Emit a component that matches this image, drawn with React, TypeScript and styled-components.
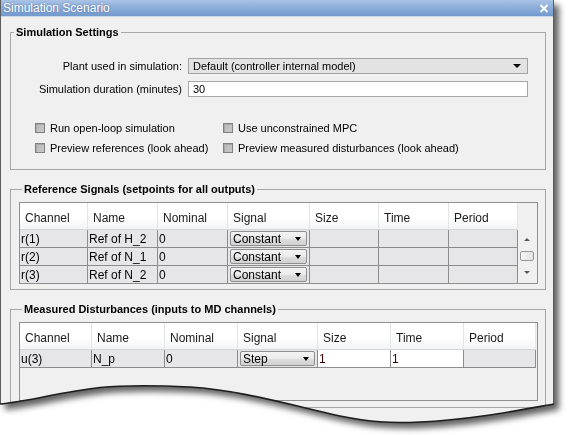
import * as React from "react";
import styled, { createGlobalStyle } from "styled-components";

const GlobalStyle = createGlobalStyle`
  html, body { margin: 0; padding: 0; background: #fff; }
  body { font-family: "Liberation Sans", Arial, sans-serif; }
`;

const edge =
  "M554 404 C520 410 470 420 420 422 C390 423.5 370 422 340 416 C290 405 240 390 190 387 C160 385.5 120 385.5 100 387.5 C60 392 30 401 0 404";

const refColumns = "68px 70px 70px 82px 69px 70px 69px 18px";
const mdColumns = "72px 73px 73px 80px 73px 73px 72px";

const headers = ["Channel", "Name", "Nominal", "Signal", "Size", "Time", "Period"];

const refRows = [
  { channel: "r(1)", name: "Ref of H_2" },
  { channel: "r(2)", name: "Ref of N_1" },
  { channel: "r(3)", name: "Ref of N_2" },
];

export default function App() {
  return (
    <>
      <GlobalStyle />
      <Page>
        <Frame>
          <Window>
            <TitleBar>
              <Title>Simulation Scenario</Title>
              <svg width="10" height="9" viewBox="0 0 10 9">
                <path d="M1.5 1 L8.5 8 M8.5 1 L1.5 8" stroke="#fff" strokeWidth="1.8" />
              </svg>
            </TitleBar>
            <Body>
              <Group $pad="19px 0 11px 0">
                <Legend>Simulation Settings</Legend>
                <Form>
                  <Label>Plant used in simulation:</Label>
                  <Combo>
                    Default (controller internal model)
                    <Caret $w={8} />
                  </Combo>
                  <Label>Simulation duration (minutes)</Label>
                  <Field>30</Field>
                </Form>
                <Checks>
                  <Check>
                    <Box />
                    Run open-loop simulation
                  </Check>
                  <Check>
                    <Box />
                    Use unconstrained MPC
                  </Check>
                  <Check>
                    <Box />
                    Preview references (look ahead)
                  </Check>
                  <Check>
                    <Box />
                    Preview measured disturbances (look ahead)
                  </Check>
                </Checks>
              </Group>

              <Group $pad="6px 7px 5px 8px">
                <Legend>Reference Signals (setpoints for all outputs)</Legend>
                <Table $cols={refColumns} $h={82}>
                  {headers.map((h) => (
                    <HeadCell key={h}>{h}</HeadCell>
                  ))}
                  <HeadFill />
                  <Scrollbar>
                    <Caret $w={6} $up $color="#5a5a5a" />
                    <Thumb />
                    <Caret $w={6} $color="#5a5a5a" />
                  </Scrollbar>
                  {refRows.map((r) => (
                    <React.Fragment key={r.channel}>
                      <Cell>{r.channel}</Cell>
                      <Cell>{r.name}</Cell>
                      <Cell>0</Cell>
                      <Cell>
                        <CellSelect>
                          Constant
                          <Caret $w={7} />
                        </CellSelect>
                      </Cell>
                      <Cell />
                      <Cell />
                      <Cell />
                    </React.Fragment>
                  ))}
                </Table>
              </Group>

              <Group $pad="6px 7px 6px 8px">
                <Legend>Measured Disturbances (inputs to MD channels)</Legend>
                <Table $cols={mdColumns} $h={79}>
                  {headers.map((h) => (
                    <HeadCell key={h}>{h}</HeadCell>
                  ))}
                  <Cell>u(3)</Cell>
                  <Cell>N_p</Cell>
                  <Cell>0</Cell>
                  <Cell>
                    <CellSelect>
                      Step
                      <Caret $w={7} />
                    </CellSelect>
                  </Cell>
                  <Cell $edit>1</Cell>
                  <Cell $edit>1</Cell>
                  <Cell />
                </Table>
              </Group>
            </Body>
          </Window>
          <TornEdge width="554" height="432" viewBox="0 0 554 432">
            <path d={edge} fill="none" stroke="#1e1e1e" strokeWidth="1.6" />
          </TornEdge>
        </Frame>
      </Page>
    </>
  );
}

const Page = styled.div`
  width: 570px;
  height: 435px;
  overflow: hidden;
  background: #fff;
`;

const Frame = styled.div`
  position: relative;
  width: 554px;
  height: 432px;
  filter: drop-shadow(5px 5px 3px rgba(0, 0, 0, 0.62));
`;

const Window = styled.div`
  width: 554px;
  height: 432px;
  box-sizing: border-box;
  background: #f0f0f0;
  border-left: 1px solid #5c5c5c;
  border-right: 1px solid #5c5c5c;
  clip-path: path("${edge} L0 0 L554 0 Z");
  display: flex;
  flex-direction: column;
`;

const TornEdge = styled.svg`
  position: absolute;
  left: 0;
  top: 0;
  pointer-events: none;
`;

const TitleBar = styled.div`
  height: 16px;
  flex: none;
  display: flex;
  align-items: center;
  justify-content: space-between;
  padding: 0 4px 0 2px;
  background: linear-gradient(#a9c3e5 0%, #8eaedb 45%, #7399cc 100%);
  border-bottom: 1px solid #c9d7ea;
`;

const Title = styled.span`
  color: #fff;
  font-size: 12px;
  text-shadow: 0 0 2px rgba(40, 60, 100, 0.55);
`;

const Body = styled.div`
  display: flex;
  flex-direction: column;
  gap: 13px;
  padding: 9px 7px 0 9px;
`;

const Group = styled.fieldset<{ $pad: string }>`
  margin: 0;
  min-width: 0;
  padding: ${(p) => p.$pad};
  border: 1px solid #a7a7a7;
`;

const Legend = styled.legend`
  margin-left: 3px;
  padding: 0 2px;
  font-size: 11px;
  font-weight: bold;
  line-height: 13px;
  color: #000;
`;

const Form = styled.div`
  display: grid;
  grid-template-columns: 171px 340px;
  column-gap: 6px;
  row-gap: 7px;
  align-items: center;
`;

const Label = styled.span`
  text-align: right;
  font-size: 11px;
  color: #000;
`;

const Combo = styled.div`
  height: 16px;
  box-sizing: border-box;
  display: flex;
  align-items: center;
  justify-content: space-between;
  padding: 0 6px 0 4px;
  background: #e3e3e3;
  border: 1px solid #a3a3a3;
  font-size: 11px;
`;

const Field = styled.div`
  height: 16px;
  box-sizing: border-box;
  display: flex;
  align-items: center;
  padding: 0 4px;
  background: #fff;
  border: 1px solid #a7a7a7;
  font-size: 11px;
`;

const Checks = styled.div`
  margin-top: 21px;
  padding-left: 24px;
  display: grid;
  grid-template-columns: 188px auto;
  grid-auto-rows: 20px;
  align-items: center;
`;

const Check = styled.label`
  display: flex;
  align-items: center;
  gap: 5px;
  font-size: 11px;
  color: #000;
`;

const Box = styled.span`
  width: 10px;
  height: 10px;
  box-sizing: border-box;
  border: 1px solid #808080;
  background: linear-gradient(135deg, #b8b8b8, #c9c9c9);
  box-shadow: inset 1px 1px #a8a8a8;
`;

const Caret = styled.span<{ $w: number; $up?: boolean; $color?: string }>`
  flex: none;
  width: 0;
  height: 0;
  border-left: ${(p) => p.$w / 2}px solid transparent;
  border-right: ${(p) => p.$w / 2}px solid transparent;
  ${(p) =>
    p.$up
      ? `border-bottom: ${Math.round(p.$w / 2)}px solid ${p.$color || "#000"};`
      : `border-top: ${Math.round(p.$w / 2)}px solid ${p.$color || "#000"};`}
`;

const Table = styled.div<{ $cols: string; $h: number }>`
  display: grid;
  grid-template-columns: ${(p) => p.$cols};
  grid-template-rows: 27px;
  grid-auto-rows: 18px;
  align-content: start;
  height: ${(p) => p.$h}px;
  box-sizing: border-box;
  overflow: hidden;
  border: 1px solid #8f8f8f;
  background: #f0f0f0;
  font-size: 12px;
`;

const HeadCell = styled.div`
  display: flex;
  align-items: center;
  padding: 3px 0 0 5px;
  background: linear-gradient(#ffffff 0%, #ffffff 55%, #f3f4f6 100%);
  border-right: 1px solid #e2e4e8;
  border-bottom: 1px solid #d6d6d6;
  color: #1a1a1a;
`;

const HeadFill = styled.div`
  background: #f0f0f0;
`;

const Cell = styled.div<{ $edit?: boolean }>`
  display: flex;
  align-items: center;
  min-width: 0;
  padding-left: 1px;
  background: ${(p) => (p.$edit ? "#fff" : "#e6e6e9")};
  border-right: 1px solid #8c8c8c;
  border-bottom: 1px solid #8c8c8c;
  color: ${(p) => (p.$edit ? "#3a0000" : "#000")};
  white-space: nowrap;
`;

const CellSelect = styled.div`
  flex: 1;
  height: 15px;
  box-sizing: border-box;
  margin: 0 2px 0 1px;
  display: flex;
  align-items: center;
  justify-content: space-between;
  padding: 0 5px 0 2px;
  border: 1px solid #8e8f8f;
  border-radius: 2px;
  background: linear-gradient(#f3f3f3 0%, #ebebeb 50%, #dddddd 51%, #d2d2d2 100%);
`;

const Scrollbar = styled.div`
  grid-column: 8;
  grid-row: 2 / span 3;
  display: flex;
  flex-direction: column;
  align-items: center;
  padding-top: 8px;
  gap: 10px;
  background: #f0f0f0;
`;

const Thumb = styled.div`
  width: 14px;
  height: 10px;
  box-sizing: border-box;
  border: 1px solid #979797;
  border-radius: 2px;
  background: linear-gradient(90deg, #f4f4f4, #e2e2e2);
`;
